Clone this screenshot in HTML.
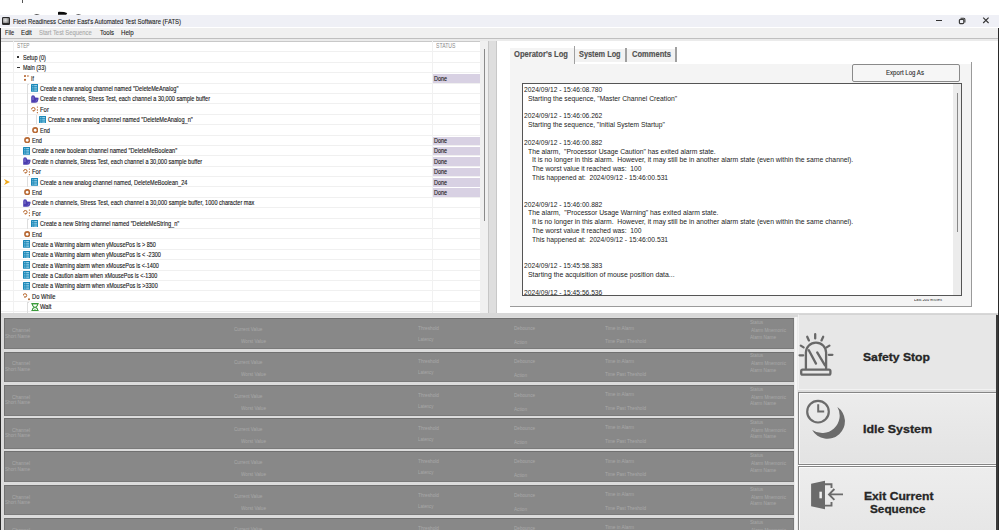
<!DOCTYPE html>
<html><head><meta charset="utf-8"><style>
html,body{margin:0;padding:0;width:999px;height:530px;overflow:hidden;background:#fff;position:relative}
span{position:absolute;white-space:pre;line-height:1;font-family:"Liberation Sans",sans-serif;transform-origin:0 50%}
</style></head><body>
<div style="position:absolute;left:21.5px;top:0px;width:1.2px;height:2.5px;background:#555"></div>
<svg style="position:absolute;left:30px;top:10px" width="60" height="6" viewBox="30 10 60 6"><path d="M34 14.8 Q36.5 13.2 39.8 14.8 Z" fill="#222"/><path d="M58 14.8 V12.4 Q58 11.7 59 11.7 L64 11.9 Q67 12.6 67.2 13.2 L66.2 14.8 Z" fill="#0a0a0a"/><path d="M75.8 14.8 Q78.3 13.3 81.2 14.8 Z" fill="#333"/></svg>
<div style="position:absolute;left:0px;top:14.8px;width:999px;height:12.7px;background:#eff0f6"></div>
<div style="position:absolute;left:2px;top:16.8px;width:8.2px;height:8px;background:#2a2a2a;border-radius:1.2px"></div>
<div style="position:absolute;left:3.2px;top:18.2px;width:5.8px;height:5.2px;background:radial-gradient(circle at 40% 45%,#e0e0e0 0,#b0b0b0 45%,#707070 80%);"></div>
<div style="position:absolute;left:936px;top:20.1px;width:5.5px;height:1.1px;background:#333"></div>
<svg style="position:absolute;left:955px;top:15px" width="14" height="12" viewBox="0 0 14 12"><rect x="4.4" y="4.4" width="4.4" height="4.2" rx="1.1" fill="none" stroke="#3a3a3a" stroke-width="1.2"/><path d="M5.6 3.3 H8.8 Q9.9 3.3 9.9 4.4 V7.4" fill="none" stroke="#3a3a3a" stroke-width="1.1"/></svg>
<svg style="position:absolute;left:980px;top:14px" width="12" height="12" viewBox="0 0 12 12"><path d="M3.2 3.6 L8.6 9 M8.6 3.6 L3.2 9" stroke="#333" stroke-width="1.1"/></svg>
<div style="position:absolute;left:0px;top:27.5px;width:999px;height:10.5px;background:#f0f0f0"></div>
<div style="position:absolute;left:0px;top:37.6px;width:999px;height:1.2px;background:#bfbfbf"></div>
<div style="position:absolute;left:0px;top:38.8px;width:999px;height:1.8px;background:#ebebeb"></div>
<div style="position:absolute;left:0px;top:40.6px;width:999px;height:1.1px;background:#c8c8c8"></div>
<div style="position:absolute;left:997.7px;top:27.5px;width:1.3px;height:502.5px;background:#2a2a2a"></div>
<div style="position:absolute;left:0px;top:27.5px;width:1.1px;height:502.5px;background:#2a2a2a"></div>
<div style="position:absolute;left:1.4px;top:41.7px;width:478.3px;height:271.1px;background:#fff"></div>
<div style="position:absolute;left:1.4px;top:51.4px;width:478.3px;height:1px;background:#f0f0f0"></div>
<div style="position:absolute;left:1.4px;top:61.79px;width:478.3px;height:1px;background:#f0f0f0"></div>
<div style="position:absolute;left:1.4px;top:72.18px;width:478.3px;height:1px;background:#f0f0f0"></div>
<div style="position:absolute;left:1.4px;top:82.57px;width:478.3px;height:1px;background:#f0f0f0"></div>
<div style="position:absolute;left:1.4px;top:92.96000000000001px;width:478.3px;height:1px;background:#f0f0f0"></div>
<div style="position:absolute;left:1.4px;top:103.35px;width:478.3px;height:1px;background:#f0f0f0"></div>
<div style="position:absolute;left:1.4px;top:113.74000000000001px;width:478.3px;height:1px;background:#f0f0f0"></div>
<div style="position:absolute;left:1.4px;top:124.13px;width:478.3px;height:1px;background:#f0f0f0"></div>
<div style="position:absolute;left:1.4px;top:134.52px;width:478.3px;height:1px;background:#f0f0f0"></div>
<div style="position:absolute;left:1.4px;top:144.91px;width:478.3px;height:1px;background:#f0f0f0"></div>
<div style="position:absolute;left:1.4px;top:155.3px;width:478.3px;height:1px;background:#f0f0f0"></div>
<div style="position:absolute;left:1.4px;top:165.69px;width:478.3px;height:1px;background:#f0f0f0"></div>
<div style="position:absolute;left:1.4px;top:176.08px;width:478.3px;height:1px;background:#f0f0f0"></div>
<div style="position:absolute;left:1.4px;top:186.47px;width:478.3px;height:1px;background:#f0f0f0"></div>
<div style="position:absolute;left:1.4px;top:196.86px;width:478.3px;height:1px;background:#f0f0f0"></div>
<div style="position:absolute;left:1.4px;top:207.25000000000003px;width:478.3px;height:1px;background:#f0f0f0"></div>
<div style="position:absolute;left:1.4px;top:217.64000000000001px;width:478.3px;height:1px;background:#f0f0f0"></div>
<div style="position:absolute;left:1.4px;top:228.03px;width:478.3px;height:1px;background:#f0f0f0"></div>
<div style="position:absolute;left:1.4px;top:238.42000000000002px;width:478.3px;height:1px;background:#f0f0f0"></div>
<div style="position:absolute;left:1.4px;top:248.81000000000003px;width:478.3px;height:1px;background:#f0f0f0"></div>
<div style="position:absolute;left:1.4px;top:259.2px;width:478.3px;height:1px;background:#f0f0f0"></div>
<div style="position:absolute;left:1.4px;top:269.59px;width:478.3px;height:1px;background:#f0f0f0"></div>
<div style="position:absolute;left:1.4px;top:279.98px;width:478.3px;height:1px;background:#f0f0f0"></div>
<div style="position:absolute;left:1.4px;top:290.37px;width:478.3px;height:1px;background:#f0f0f0"></div>
<div style="position:absolute;left:1.4px;top:300.76px;width:478.3px;height:1px;background:#f0f0f0"></div>
<div style="position:absolute;left:1.4px;top:311.15px;width:478.3px;height:1px;background:#f0f0f0"></div>
<div style="position:absolute;left:13.2px;top:41.4px;width:1px;height:271.4px;background:#f1f1f1"></div>
<div style="position:absolute;left:432.3px;top:41.4px;width:1px;height:271.4px;background:#f1f1f1"></div>
<div style="position:absolute;left:17.4px;top:56.290000000000006px;width:1.8px;height:1.8px;background:#333"></div>
<div style="position:absolute;left:17.4px;top:66.98px;width:3px;height:1.1px;background:#333"></div>
<div style="position:absolute;left:433px;top:74.17px;width:46.6px;height:8.5px;background:#d8d1e3"></div>
<svg style="position:absolute;left:24px;top:74.47px" width="7" height="9" viewBox="0 0 7 9"><circle cx="1" cy="2" r="1.1" fill="#b86a35"/><circle cx="1" cy="5.8" r="1.1" fill="#b86a35"/><path d="M3.4 1.1 L5.4 2 L3.4 2.9Z" fill="#b86a35"/></svg>
<svg style="position:absolute;left:31px;top:84.46000000000001px" width="7.4" height="7.8" viewBox="0 0 7.4 7.8"><rect width="7.4" height="7.8" rx="0.6" fill="#1b88b8"/><g fill="#b4e0f2"><rect x="1.3" y="1.2" width="4.8" height="1"/><rect x="1.3" y="3.4" width="4.8" height="1"/><rect x="1.3" y="5.6" width="4.8" height="1"/></g><rect x="2.4" y="1" width="0.8" height="6" fill="#1b88b8"/></svg>
<svg style="position:absolute;left:31px;top:94.95px" width="8" height="8" viewBox="0 0 8 8"><path d="M0.2 7.7 V2.2 Q0.2 0.2 2 0.2 Q3.8 0.2 4.2 2.4 L7.5 2.8 V4.2 L6.4 7.2 L4.2 7.7 Z" fill="#4b3eb0"/><path d="M2 1.6 V5" stroke="#9a90d8" stroke-width="0.8"/><path d="M4.8 6.6 L6.2 4.2" stroke="#8a80d0" stroke-width="0.6"/></svg>
<svg style="position:absolute;left:31px;top:104.54px" width="8" height="9" viewBox="0 0 8 9"><path d="M0.6 4.4 A1.75 1.75 0 1 1 2.2 6" fill="none" stroke="#b5652a" stroke-width="1"/><path d="M1.2 5.2 L2.9 5.1 L2.2 6.8 Z" fill="#b5652a"/><circle cx="6.4" cy="2.1" r="0.65" fill="#b5652a"/><circle cx="6.4" cy="5" r="0.65" fill="#b5652a"/><circle cx="6.4" cy="7.7" r="0.65" fill="#b5652a"/></svg>
<svg style="position:absolute;left:39px;top:115.63000000000001px" width="7.4" height="7.8" viewBox="0 0 7.4 7.8"><rect width="7.4" height="7.8" rx="0.6" fill="#1b88b8"/><g fill="#b4e0f2"><rect x="1.3" y="1.2" width="4.8" height="1"/><rect x="1.3" y="3.4" width="4.8" height="1"/><rect x="1.3" y="5.6" width="4.8" height="1"/></g><rect x="2.4" y="1" width="0.8" height="6" fill="#1b88b8"/></svg>
<svg style="position:absolute;left:32px;top:126.61999999999999px" width="6.4" height="6.4" viewBox="0 0 6.4 6.4"><circle cx="3.2" cy="3.2" r="2.3" fill="none" stroke="#b86a35" stroke-width="1.6"/></svg>
<div style="position:absolute;left:433px;top:136.51000000000002px;width:46.6px;height:8.5px;background:#d8d1e3"></div>
<svg style="position:absolute;left:24px;top:137.01000000000002px" width="6.4" height="6.4" viewBox="0 0 6.4 6.4"><circle cx="3.2" cy="3.2" r="2.3" fill="none" stroke="#b86a35" stroke-width="1.6"/></svg>
<div style="position:absolute;left:433px;top:146.90000000000003px;width:46.6px;height:8.5px;background:#d8d1e3"></div>
<svg style="position:absolute;left:23px;top:146.8px" width="7.4" height="7.8" viewBox="0 0 7.4 7.8"><rect width="7.4" height="7.8" rx="0.6" fill="#1b88b8"/><g fill="#b4e0f2"><rect x="1.3" y="1.2" width="4.8" height="1"/><rect x="1.3" y="3.4" width="4.8" height="1"/><rect x="1.3" y="5.6" width="4.8" height="1"/></g><rect x="2.4" y="1" width="0.8" height="6" fill="#1b88b8"/></svg>
<div style="position:absolute;left:433px;top:157.29000000000002px;width:46.6px;height:8.5px;background:#d8d1e3"></div>
<svg style="position:absolute;left:23px;top:157.29000000000002px" width="8" height="8" viewBox="0 0 8 8"><path d="M0.2 7.7 V2.2 Q0.2 0.2 2 0.2 Q3.8 0.2 4.2 2.4 L7.5 2.8 V4.2 L6.4 7.2 L4.2 7.7 Z" fill="#4b3eb0"/><path d="M2 1.6 V5" stroke="#9a90d8" stroke-width="0.8"/><path d="M4.8 6.6 L6.2 4.2" stroke="#8a80d0" stroke-width="0.6"/></svg>
<div style="position:absolute;left:433px;top:167.68px;width:46.6px;height:8.5px;background:#d8d1e3"></div>
<svg style="position:absolute;left:23px;top:166.88px" width="8" height="9" viewBox="0 0 8 9"><path d="M0.6 4.4 A1.75 1.75 0 1 1 2.2 6" fill="none" stroke="#b5652a" stroke-width="1"/><path d="M1.2 5.2 L2.9 5.1 L2.2 6.8 Z" fill="#b5652a"/><circle cx="6.4" cy="2.1" r="0.65" fill="#b5652a"/><circle cx="6.4" cy="5" r="0.65" fill="#b5652a"/><circle cx="6.4" cy="7.7" r="0.65" fill="#b5652a"/></svg>
<div style="position:absolute;left:433px;top:178.07px;width:46.6px;height:8.5px;background:#d8d1e3"></div>
<svg style="position:absolute;left:31px;top:177.96999999999997px" width="7.4" height="7.8" viewBox="0 0 7.4 7.8"><rect width="7.4" height="7.8" rx="0.6" fill="#1b88b8"/><g fill="#b4e0f2"><rect x="1.3" y="1.2" width="4.8" height="1"/><rect x="1.3" y="3.4" width="4.8" height="1"/><rect x="1.3" y="5.6" width="4.8" height="1"/></g><rect x="2.4" y="1" width="0.8" height="6" fill="#1b88b8"/></svg>
<div style="position:absolute;left:433px;top:188.46000000000004px;width:46.6px;height:8.5px;background:#d8d1e3"></div>
<svg style="position:absolute;left:24px;top:188.96000000000004px" width="6.4" height="6.4" viewBox="0 0 6.4 6.4"><circle cx="3.2" cy="3.2" r="2.3" fill="none" stroke="#b86a35" stroke-width="1.6"/></svg>
<svg style="position:absolute;left:23px;top:198.85000000000002px" width="8" height="8" viewBox="0 0 8 8"><path d="M0.2 7.7 V2.2 Q0.2 0.2 2 0.2 Q3.8 0.2 4.2 2.4 L7.5 2.8 V4.2 L6.4 7.2 L4.2 7.7 Z" fill="#4b3eb0"/><path d="M2 1.6 V5" stroke="#9a90d8" stroke-width="0.8"/><path d="M4.8 6.6 L6.2 4.2" stroke="#8a80d0" stroke-width="0.6"/></svg>
<svg style="position:absolute;left:23px;top:208.44px" width="8" height="9" viewBox="0 0 8 9"><path d="M0.6 4.4 A1.75 1.75 0 1 1 2.2 6" fill="none" stroke="#b5652a" stroke-width="1"/><path d="M1.2 5.2 L2.9 5.1 L2.2 6.8 Z" fill="#b5652a"/><circle cx="6.4" cy="2.1" r="0.65" fill="#b5652a"/><circle cx="6.4" cy="5" r="0.65" fill="#b5652a"/><circle cx="6.4" cy="7.7" r="0.65" fill="#b5652a"/></svg>
<svg style="position:absolute;left:31px;top:219.52999999999997px" width="7.4" height="7.8" viewBox="0 0 7.4 7.8"><rect width="7.4" height="7.8" rx="0.6" fill="#1b88b8"/><g fill="#b4e0f2"><rect x="1.3" y="1.2" width="4.8" height="1"/><rect x="1.3" y="3.4" width="4.8" height="1"/><rect x="1.3" y="5.6" width="4.8" height="1"/></g><rect x="2.4" y="1" width="0.8" height="6" fill="#1b88b8"/></svg>
<svg style="position:absolute;left:24px;top:230.52000000000004px" width="6.4" height="6.4" viewBox="0 0 6.4 6.4"><circle cx="3.2" cy="3.2" r="2.3" fill="none" stroke="#b86a35" stroke-width="1.6"/></svg>
<svg style="position:absolute;left:23px;top:240.31px" width="7.4" height="7.8" viewBox="0 0 7.4 7.8"><rect width="7.4" height="7.8" rx="0.6" fill="#1b88b8"/><g fill="#b4e0f2"><rect x="1.3" y="1.2" width="4.8" height="1"/><rect x="1.3" y="3.4" width="4.8" height="1"/><rect x="1.3" y="5.6" width="4.8" height="1"/></g><rect x="2.4" y="1" width="0.8" height="6" fill="#1b88b8"/></svg>
<svg style="position:absolute;left:23px;top:250.7px" width="7.4" height="7.8" viewBox="0 0 7.4 7.8"><rect width="7.4" height="7.8" rx="0.6" fill="#1b88b8"/><g fill="#b4e0f2"><rect x="1.3" y="1.2" width="4.8" height="1"/><rect x="1.3" y="3.4" width="4.8" height="1"/><rect x="1.3" y="5.6" width="4.8" height="1"/></g><rect x="2.4" y="1" width="0.8" height="6" fill="#1b88b8"/></svg>
<svg style="position:absolute;left:23px;top:261.09px" width="7.4" height="7.8" viewBox="0 0 7.4 7.8"><rect width="7.4" height="7.8" rx="0.6" fill="#1b88b8"/><g fill="#b4e0f2"><rect x="1.3" y="1.2" width="4.8" height="1"/><rect x="1.3" y="3.4" width="4.8" height="1"/><rect x="1.3" y="5.6" width="4.8" height="1"/></g><rect x="2.4" y="1" width="0.8" height="6" fill="#1b88b8"/></svg>
<svg style="position:absolute;left:23px;top:271.48px" width="7.4" height="7.8" viewBox="0 0 7.4 7.8"><rect width="7.4" height="7.8" rx="0.6" fill="#1b88b8"/><g fill="#b4e0f2"><rect x="1.3" y="1.2" width="4.8" height="1"/><rect x="1.3" y="3.4" width="4.8" height="1"/><rect x="1.3" y="5.6" width="4.8" height="1"/></g><rect x="2.4" y="1" width="0.8" height="6" fill="#1b88b8"/></svg>
<svg style="position:absolute;left:23px;top:281.87px" width="7.4" height="7.8" viewBox="0 0 7.4 7.8"><rect width="7.4" height="7.8" rx="0.6" fill="#1b88b8"/><g fill="#b4e0f2"><rect x="1.3" y="1.2" width="4.8" height="1"/><rect x="1.3" y="3.4" width="4.8" height="1"/><rect x="1.3" y="5.6" width="4.8" height="1"/></g><rect x="2.4" y="1" width="0.8" height="6" fill="#1b88b8"/></svg>
<svg style="position:absolute;left:23px;top:291.56px" width="9" height="9" viewBox="0 0 9 9"><path d="M0.2 3.6 A1.75 1.75 0 1 1 1.8 5.2" fill="none" stroke="#b5652a" stroke-width="1"/><path d="M0.8 4.4 L2.5 4.3 L1.8 6 Z" fill="#b5652a"/><circle cx="6" cy="7.3" r="1" fill="#b5652a"/></svg>
<svg style="position:absolute;left:31px;top:302.65px" width="8" height="8.4" viewBox="0 0 8 8.4"><path d="M0.4 0.6 H7.6 M0.4 7.8 H7.6" stroke="#3a9a3a" stroke-width="1.2"/><path d="M1.2 0.8 Q1.2 3.2 3.4 4.2 Q1.2 5.2 1.2 7.6 H6.8 Q6.8 5.2 4.6 4.2 Q6.8 3.2 6.8 0.8 Z" fill="none" stroke="#3a9a3a" stroke-width="1.1"/><path d="M3 6.6 H5 L4 5.6Z" fill="#3a9a3a"/></svg>
<div style="position:absolute;left:26.8px;top:84px;width:0.8px;height:50px;background:#dedede"></div>
<div style="position:absolute;left:26.8px;top:84px;width:1.8px;height:0.8px;background:#dedede"></div>
<div style="position:absolute;left:35.5px;top:115px;width:0.8px;height:9px;background:#dedede"></div>
<div style="position:absolute;left:35.5px;top:115px;width:1.8px;height:0.8px;background:#dedede"></div>
<div style="position:absolute;left:26.8px;top:176px;width:0.8px;height:10.5px;background:#dedede"></div>
<div style="position:absolute;left:26.8px;top:176px;width:1.8px;height:0.8px;background:#dedede"></div>
<div style="position:absolute;left:26.8px;top:219px;width:0.8px;height:9.5px;background:#dedede"></div>
<div style="position:absolute;left:26.8px;top:219px;width:1.8px;height:0.8px;background:#dedede"></div>
<div style="position:absolute;left:26.8px;top:302px;width:0.8px;height:10.5px;background:#dedede"></div>
<div style="position:absolute;left:26.8px;top:302px;width:1.8px;height:0.8px;background:#dedede"></div>
<svg style="position:absolute;left:4px;top:178.76999999999998px" width="7" height="6" viewBox="0 0 7 6"><path d="M0 0 L6 3 L0 6 L1.8 3 Z" fill="#f0a818"/></svg>
<div style="position:absolute;left:479.7px;top:41.4px;width:8.3px;height:271.4px;background:#f0f0f0"></div>
<div style="position:absolute;left:484px;top:48.8px;width:1px;height:172px;background:#8a8a8a"></div>
<div style="position:absolute;left:488px;top:41.4px;width:1px;height:271.4px;background:#c6c6c6"></div>
<div style="position:absolute;left:489px;top:41.4px;width:7.3px;height:271.4px;background:#dedede"></div>
<div style="position:absolute;left:496.3px;top:41.4px;width:1px;height:272.6px;background:#c8c8c8"></div>
<div style="position:absolute;left:497.3px;top:41.4px;width:500.4px;height:272.6px;background:#fff"></div>
<div style="position:absolute;left:510.2px;top:48px;width:63.8px;height:15.5px;background:#f4f4f4"></div>
<div style="position:absolute;left:575.4px;top:49px;width:50px;height:12.6px;background:#f2f2f2"></div>
<div style="position:absolute;left:627px;top:49px;width:48.5px;height:12.6px;background:#f2f2f2"></div>
<div style="position:absolute;left:573.5px;top:46px;width:1.2px;height:17.6px;background:#a0a0a0"></div>
<div style="position:absolute;left:625.4px;top:48px;width:1.2px;height:13.5px;background:#a0a0a0"></div>
<div style="position:absolute;left:675.4px;top:47px;width:1.2px;height:14.5px;background:#a0a0a0"></div>
<div style="position:absolute;left:510px;top:63.5px;width:461.5px;height:242.5px;background:#f4f4f4"></div>
<div style="position:absolute;left:971.2px;top:62px;width:1px;height:245px;background:#9a9a9a"></div>
<div style="position:absolute;left:510px;top:305.9px;width:462px;height:1px;background:#9a9a9a"></div>
<div style="position:absolute;left:851.9px;top:64.3px;width:106px;height:15.5px;border:1px solid #8a8a8a;border-radius:2px;background:#f6f6f6"></div>
<div style="position:absolute;left:522px;top:83.2px;width:438px;height:210.4px;border:1px solid #555;background:#fff;overflow:hidden"></div>
<div style="position:absolute;left:953.2px;top:84.2px;width:7.8px;height:210.4px;background:#ececec"></div>
<div style="position:absolute;left:956.6px;top:93px;width:1px;height:139px;background:#888"></div>
<div style="position:absolute;left:1.4px;top:312.8px;width:996.3px;height:4.7px;background:#d8d8d8"></div>
<div style="position:absolute;left:1.0px;top:317.4px;width:796px;height:212.60000000000002px;background:#dcdcdc"></div>
<div style="position:absolute;left:3.8px;top:318.30px;width:790.5px;height:30.7px;background:#888;box-shadow:inset 1px 1px 0 #707070, inset -1px -1px 0 #7a7a7a"></div>
<div style="position:absolute;left:3.8px;top:351.57px;width:790.5px;height:30.7px;background:#888;box-shadow:inset 1px 1px 0 #707070, inset -1px -1px 0 #7a7a7a"></div>
<div style="position:absolute;left:3.8px;top:384.84px;width:790.5px;height:30.7px;background:#888;box-shadow:inset 1px 1px 0 #707070, inset -1px -1px 0 #7a7a7a"></div>
<div style="position:absolute;left:3.8px;top:418.11px;width:790.5px;height:30.7px;background:#888;box-shadow:inset 1px 1px 0 #707070, inset -1px -1px 0 #7a7a7a"></div>
<div style="position:absolute;left:3.8px;top:451.38px;width:790.5px;height:30.7px;background:#888;box-shadow:inset 1px 1px 0 #707070, inset -1px -1px 0 #7a7a7a"></div>
<div style="position:absolute;left:3.8px;top:484.65px;width:790.5px;height:30.7px;background:#888;box-shadow:inset 1px 1px 0 #707070, inset -1px -1px 0 #7a7a7a"></div>
<div style="position:absolute;left:3.8px;top:517.92px;width:790.5px;height:30.7px;background:#888;box-shadow:inset 1px 1px 0 #707070, inset -1px -1px 0 #7a7a7a"></div>
<div style="position:absolute;left:794.3px;top:317.4px;width:3.9px;height:212.60000000000002px;background:#ebebeb"></div>
<div style="position:absolute;left:795.3px;top:317.4px;width:1.6px;height:212.60000000000002px;background:#f6f6f6"></div>
<div style="position:absolute;left:798.2px;top:314.3px;width:199.0999999999999px;height:76px;box-sizing:border-box;border:1px solid #f2f2f2;border-top-color:#d4d4d4;border-right-color:#a4a4a4;background:#e7e7e7"></div>
<div style="position:absolute;left:798.2px;top:390.3px;width:199px;height:1.6px;background:#dcdcdc"></div>
<div style="position:absolute;left:798.2px;top:391.9px;width:199.0999999999999px;height:73px;box-sizing:border-box;border:1px solid #858585;box-shadow:inset 1px 1px 0 #fafafa, inset -1px -1px 0 #efefef;background:linear-gradient(#ececec,#e3e3e3)"></div>
<div style="position:absolute;left:798.2px;top:465.6px;width:199.0999999999999px;height:70px;box-sizing:border-box;border:1px solid #858585;box-shadow:inset 1px 1px 0 #fafafa, inset -1px -1px 0 #efefef;background:linear-gradient(#ededed,#e6e6e6)"></div>
<div style="position:absolute;left:996.3px;top:315px;width:1.4px;height:215px;background:#3a3a3a"></div>
<svg style="position:absolute;left:795px;top:325px" width="50" height="60" viewBox="795 325 50 60">
<g fill="none" stroke="#686868" stroke-width="2.3" stroke-linecap="round">
<rect x="801.2" y="369.6" width="29.2" height="5" rx="1.4"/>
<path d="M805.9 368.6 V352.6 A10.1 10.1 0 0 1 826.1 352.6 V368.6"/>
<path d="M808.8 350.2 L816 363.6 M817.2 352.4 L825 365.3"/>
<path d="M815.2 334.2 V338.4 M807.2 336.8 L808.9 340.4 M823.2 336.8 L821.5 340.4 M800.8 345.6 L803.6 347.4 M829.4 345.6 L826.6 347.4 M799.6 355.3 H803.2 M828.8 354.8 H832.4"/>
</g></svg>
<svg style="position:absolute;left:798px;top:395px" width="55" height="50" viewBox="798 395 55 50">
<circle cx="818" cy="411.7" r="10.8" fill="none" stroke="#6b6b6b" stroke-width="2.2"/>
<path d="M818.2 404.3 V411.4 H824.2" fill="none" stroke="#6b6b6b" stroke-width="2"/>
<path d="M837.4 406.9 A17.5 17.5 0 1 1 812.2 429.9 A17.5 17.5 0 0 0 837.4 406.9 Z" fill="#6b6b6b"/>
</svg>
<svg style="position:absolute;left:800px;top:470px" width="50" height="50" viewBox="800 470 50 50">
<path d="M811.1 483.7 L825 480.8 V509.2 L811.1 506.3 Z" fill="#6b6b6b"/>
<rect x="819.4" y="491.7" width="2.5" height="6.6" fill="#f0f0f0"/>
<path d="M825 484.3 H831.5 V488 M831.5 502 V505.6 H825" fill="none" stroke="#6b6b6b" stroke-width="1.9"/>
<path d="M828.6 494.4 H843 M834.4 489 L829 494.4 L834.4 499.8" fill="none" stroke="#6b6b6b" stroke-width="1.9"/>
</svg>
<span style="left:13.30px;top:17.98px;font-size:7px;color:#1a1a1a;font-weight:normal;transform:scaleX(0.8504);-webkit-text-stroke:0.1px #1a1a1a">Fleet Readiness Center East&#x27;s Automated Test Software (FATS)</span>
<span style="left:4.90px;top:28.78px;font-size:7px;color:#222;font-weight:normal;transform:scaleX(0.8066);-webkit-text-stroke:0.1px #222">File</span>
<span style="left:21.30px;top:28.78px;font-size:7px;color:#222;font-weight:normal;transform:scaleX(0.8870);-webkit-text-stroke:0.1px #222">Edit</span>
<span style="left:39.00px;top:28.78px;font-size:7px;color:#a8a8a8;font-weight:normal;transform:scaleX(0.8391);-webkit-text-stroke:0.1px #a8a8a8">Start Test Sequence</span>
<span style="left:99.80px;top:28.78px;font-size:7px;color:#222;font-weight:normal;transform:scaleX(0.8566);-webkit-text-stroke:0.1px #222">Tools</span>
<span style="left:121.20px;top:28.78px;font-size:7px;color:#222;font-weight:normal;transform:scaleX(0.8746);-webkit-text-stroke:0.1px #222">Help</span>
<span style="left:16.60px;top:42.18px;font-size:7px;color:#8a8a8a;font-weight:normal;transform:scaleX(0.6886)">STEP</span>
<span style="left:436.00px;top:42.18px;font-size:7px;color:#8a8a8a;font-weight:normal;transform:scaleX(0.7337)">STATUS</span>
<span style="left:23.00px;top:53.87px;font-size:7px;color:#141414;font-weight:normal;transform:scaleX(0.7952);-webkit-text-stroke:0.12px #141414">Setup (0)</span>
<span style="left:23.00px;top:64.26px;font-size:7px;color:#141414;font-weight:normal;transform:scaleX(0.7776);-webkit-text-stroke:0.12px #141414">Main (33)</span>
<span style="left:31.30px;top:74.65px;font-size:7px;color:#141414;font-weight:normal;transform:scaleX(0.7454);-webkit-text-stroke:0.12px #141414">If</span>
<span style="left:434.20px;top:74.65px;font-size:7px;color:#141414;font-weight:normal;transform:scaleX(0.7768);-webkit-text-stroke:0.12px #141414">Done</span>
<span style="left:39.60px;top:85.04px;font-size:7px;color:#141414;font-weight:normal;transform:scaleX(0.7996);-webkit-text-stroke:0.12px #141414">Create a new analog channel named &quot;DeleteMeAnalog&quot;</span>
<span style="left:39.60px;top:95.43px;font-size:7px;color:#141414;font-weight:normal;transform:scaleX(0.7938);-webkit-text-stroke:0.12px #141414">Create n channels, Stress Test, each channel a 30,000 sample buffer</span>
<span style="left:39.60px;top:105.82px;font-size:7px;color:#141414;font-weight:normal;transform:scaleX(0.8476);-webkit-text-stroke:0.12px #141414">For</span>
<span style="left:47.60px;top:116.21px;font-size:7px;color:#141414;font-weight:normal;transform:scaleX(0.8006);-webkit-text-stroke:0.12px #141414">Create a new analog channel named &quot;DeleteMeAnalog_n&quot;</span>
<span style="left:39.60px;top:126.60px;font-size:7px;color:#141414;font-weight:normal;transform:scaleX(0.7940);-webkit-text-stroke:0.12px #141414">End</span>
<span style="left:31.60px;top:136.99px;font-size:7px;color:#141414;font-weight:normal;transform:scaleX(0.7940);-webkit-text-stroke:0.12px #141414">End</span>
<span style="left:434.20px;top:136.99px;font-size:7px;color:#141414;font-weight:normal;transform:scaleX(0.7768);-webkit-text-stroke:0.12px #141414">Done</span>
<span style="left:31.60px;top:147.38px;font-size:7px;color:#141414;font-weight:normal;transform:scaleX(0.8028);-webkit-text-stroke:0.12px #141414">Create a new boolean channel named &quot;DeleteMeBoolean&quot;</span>
<span style="left:434.20px;top:147.38px;font-size:7px;color:#141414;font-weight:normal;transform:scaleX(0.7768);-webkit-text-stroke:0.12px #141414">Done</span>
<span style="left:31.60px;top:157.77px;font-size:7px;color:#141414;font-weight:normal;transform:scaleX(0.7947);-webkit-text-stroke:0.12px #141414">Create n channels, Stress Test, each channel a 30,000 sample buffer</span>
<span style="left:434.20px;top:157.77px;font-size:7px;color:#141414;font-weight:normal;transform:scaleX(0.7768);-webkit-text-stroke:0.12px #141414">Done</span>
<span style="left:31.60px;top:168.16px;font-size:7px;color:#141414;font-weight:normal;transform:scaleX(0.8476);-webkit-text-stroke:0.12px #141414">For</span>
<span style="left:434.20px;top:168.16px;font-size:7px;color:#141414;font-weight:normal;transform:scaleX(0.7768);-webkit-text-stroke:0.12px #141414">Done</span>
<span style="left:39.60px;top:178.55px;font-size:7px;color:#141414;font-weight:normal;transform:scaleX(0.7940);-webkit-text-stroke:0.12px #141414">Create a new analog channel named, DeleteMeBoolean_24</span>
<span style="left:434.20px;top:178.55px;font-size:7px;color:#141414;font-weight:normal;transform:scaleX(0.7768);-webkit-text-stroke:0.12px #141414">Done</span>
<span style="left:31.60px;top:188.94px;font-size:7px;color:#141414;font-weight:normal;transform:scaleX(0.7940);-webkit-text-stroke:0.12px #141414">End</span>
<span style="left:434.20px;top:188.94px;font-size:7px;color:#141414;font-weight:normal;transform:scaleX(0.7768);-webkit-text-stroke:0.12px #141414">Done</span>
<span style="left:31.60px;top:199.33px;font-size:7px;color:#141414;font-weight:normal;transform:scaleX(0.7953);-webkit-text-stroke:0.12px #141414">Create n channels, Stress Test, each channel a 30,000 sample buffer, 1000 character max</span>
<span style="left:31.60px;top:209.72px;font-size:7px;color:#141414;font-weight:normal;transform:scaleX(0.8476);-webkit-text-stroke:0.12px #141414">For</span>
<span style="left:39.60px;top:220.11px;font-size:7px;color:#141414;font-weight:normal;transform:scaleX(0.7977);-webkit-text-stroke:0.12px #141414">Create a new String channel named &quot;DeleteMeString_n&quot;</span>
<span style="left:31.60px;top:230.50px;font-size:7px;color:#141414;font-weight:normal;transform:scaleX(0.7940);-webkit-text-stroke:0.12px #141414">End</span>
<span style="left:31.60px;top:240.89px;font-size:7px;color:#141414;font-weight:normal;transform:scaleX(0.7840);-webkit-text-stroke:0.12px #141414">Create a Warning alarm when yMousePos is &gt; 850</span>
<span style="left:31.60px;top:251.28px;font-size:7px;color:#141414;font-weight:normal;transform:scaleX(0.7848);-webkit-text-stroke:0.12px #141414">Create a Warning alarm when yMousePos is &lt; -2300</span>
<span style="left:31.60px;top:261.67px;font-size:7px;color:#141414;font-weight:normal;transform:scaleX(0.7824);-webkit-text-stroke:0.12px #141414">Create a Warning alarm when xMousePos is &lt;-1400</span>
<span style="left:31.60px;top:272.06px;font-size:7px;color:#141414;font-weight:normal;transform:scaleX(0.7812);-webkit-text-stroke:0.12px #141414">Create a Caution alarm when xMousePos is &lt;-1300</span>
<span style="left:31.60px;top:282.45px;font-size:7px;color:#141414;font-weight:normal;transform:scaleX(0.7863);-webkit-text-stroke:0.12px #141414">Create a Warning alarm when xMousePos is &gt;3300</span>
<span style="left:31.60px;top:292.84px;font-size:7px;color:#141414;font-weight:normal;transform:scaleX(0.8238);-webkit-text-stroke:0.12px #141414">Do While</span>
<span style="left:39.60px;top:303.23px;font-size:7px;color:#141414;font-weight:normal;transform:scaleX(0.8291);-webkit-text-stroke:0.12px #141414">Wait</span>
<span style="left:513.60px;top:49.75px;font-size:8.3px;color:#505050;font-weight:bold;transform:scaleX(0.9114);-webkit-text-stroke:0.15px #505050">Operator&#x27;s Log</span>
<span style="left:579.40px;top:50.45px;font-size:8.3px;color:#505050;font-weight:bold;transform:scaleX(0.8845);-webkit-text-stroke:0.15px #505050">System Log</span>
<span style="left:631.90px;top:50.45px;font-size:8.3px;color:#505050;font-weight:bold;transform:scaleX(0.9096);-webkit-text-stroke:0.15px #505050">Comments</span>
<span style="left:886.00px;top:68.98px;font-size:7px;color:#2a2a2a;font-weight:normal;transform:scaleX(0.8717);-webkit-text-stroke:0.1px #2a2a2a">Export Log As</span>
<span style="left:914.00px;top:296.56px;font-size:5px;color:#333;font-weight:normal;transform:scaleX(0.7867)">Last 500 entries</span>
<span style="left:523.70px;top:85.79px;font-size:7.6px;color:#222;font-weight:normal;transform:scaleX(0.8788)">2024/09/12 - 15:46:08.780</span>
<span style="left:527.90px;top:94.62px;font-size:7.6px;color:#222;font-weight:normal;transform:scaleX(0.8879)">Starting the sequence, &quot;Master Channel Creation&quot;</span>
<span style="left:523.70px;top:112.28px;font-size:7.6px;color:#222;font-weight:normal;transform:scaleX(0.8788)">2024/09/12 - 15:46:06.262</span>
<span style="left:527.90px;top:121.11px;font-size:7.6px;color:#222;font-weight:normal;transform:scaleX(0.8818)">Starting the sequence, &quot;Initial System Startup&quot;</span>
<span style="left:523.70px;top:138.77px;font-size:7.6px;color:#222;font-weight:normal;transform:scaleX(0.8788)">2024/09/12 - 15:46:00.882</span>
<span style="left:527.90px;top:147.60px;font-size:7.6px;color:#222;font-weight:normal;transform:scaleX(0.8898)">The alarm,  &quot;Processor Usage Caution&quot; has exited alarm state.</span>
<span style="left:532.00px;top:156.43px;font-size:7.6px;color:#222;font-weight:normal;transform:scaleX(0.8985)">It is no longer in this alarm.  However, it may still be in another alarm state (even within the same channel).</span>
<span style="left:532.00px;top:165.26px;font-size:7.6px;color:#222;font-weight:normal;transform:scaleX(0.8853)">The worst value it reached was:  100</span>
<span style="left:532.00px;top:174.09px;font-size:7.6px;color:#222;font-weight:normal;transform:scaleX(0.8831)">This happened at:  2024/09/12 - 15:46:00.531</span>
<span style="left:523.70px;top:200.58px;font-size:7.6px;color:#222;font-weight:normal;transform:scaleX(0.8788)">2024/09/12 - 15:46:00.882</span>
<span style="left:527.90px;top:209.41px;font-size:7.6px;color:#222;font-weight:normal;transform:scaleX(0.8949)">The alarm,  &quot;Processor Usage Warning&quot; has exited alarm state.</span>
<span style="left:532.00px;top:218.24px;font-size:7.6px;color:#222;font-weight:normal;transform:scaleX(0.8985)">It is no longer in this alarm.  However, it may still be in another alarm state (even within the same channel).</span>
<span style="left:532.00px;top:227.07px;font-size:7.6px;color:#222;font-weight:normal;transform:scaleX(0.8853)">The worst value it reached was:  100</span>
<span style="left:532.00px;top:235.90px;font-size:7.6px;color:#222;font-weight:normal;transform:scaleX(0.8831)">This happened at:  2024/09/12 - 15:46:00.531</span>
<span style="left:523.70px;top:262.39px;font-size:7.6px;color:#222;font-weight:normal;transform:scaleX(0.8788)">2024/09/12 - 15:45:58.383</span>
<span style="left:527.90px;top:271.22px;font-size:7.6px;color:#222;font-weight:normal;transform:scaleX(0.9067)">Starting the acquisition of mouse position data...</span>
<span style="left:523.70px;top:288.88px;font-size:7.6px;color:#222;font-weight:normal;transform:scaleX(0.8788)">2024/09/12 - 15:45:56.536</span>
<span style="left:12.00px;top:328.16px;font-size:5.2px;color:#a9a9a9;font-weight:normal;transform:scaleX(0.9313)">Channel</span>
<span style="left:5.20px;top:333.56px;font-size:5.2px;color:#a9a9a9;font-weight:normal;transform:scaleX(0.9029)">Short Name</span>
<span style="left:233.60px;top:327.16px;font-size:5.2px;color:#a9a9a9;font-weight:normal;transform:scaleX(0.8980)">Current Value</span>
<span style="left:241.00px;top:339.16px;font-size:5.2px;color:#a9a9a9;font-weight:normal;transform:scaleX(0.8999)">Worst Value</span>
<span style="left:418.00px;top:326.16px;font-size:5.2px;color:#a9a9a9;font-weight:normal;transform:scaleX(0.9100)">Threshold</span>
<span style="left:418.00px;top:337.16px;font-size:5.2px;color:#a9a9a9;font-weight:normal;transform:scaleX(0.8530)">Latency</span>
<span style="left:514.00px;top:326.16px;font-size:5.2px;color:#a9a9a9;font-weight:normal;transform:scaleX(0.8877)">Debounce</span>
<span style="left:514.00px;top:340.16px;font-size:5.2px;color:#a9a9a9;font-weight:normal;transform:scaleX(0.9014)">Action</span>
<span style="left:605.00px;top:325.66px;font-size:5.2px;color:#a9a9a9;font-weight:normal;transform:scaleX(0.9202)">Time in Alarm</span>
<span style="left:605.00px;top:339.16px;font-size:5.2px;color:#a9a9a9;font-weight:normal;transform:scaleX(0.8943)">Time Past Theshold</span>
<span style="left:750.00px;top:320.16px;font-size:5.2px;color:#a9a9a9;font-weight:normal;transform:scaleX(0.8832)">Status</span>
<span style="left:751.00px;top:328.16px;font-size:5.2px;color:#a9a9a9;font-weight:normal;transform:scaleX(0.8992)">Alarm Mnemonic</span>
<span style="left:750.00px;top:334.66px;font-size:5.2px;color:#a9a9a9;font-weight:normal;transform:scaleX(0.9019)">Alarm Name</span>
<span style="left:12.00px;top:361.43px;font-size:5.2px;color:#a9a9a9;font-weight:normal;transform:scaleX(0.9313)">Channel</span>
<span style="left:5.20px;top:366.83px;font-size:5.2px;color:#a9a9a9;font-weight:normal;transform:scaleX(0.9029)">Short Name</span>
<span style="left:233.60px;top:360.43px;font-size:5.2px;color:#a9a9a9;font-weight:normal;transform:scaleX(0.8980)">Current Value</span>
<span style="left:241.00px;top:372.43px;font-size:5.2px;color:#a9a9a9;font-weight:normal;transform:scaleX(0.8999)">Worst Value</span>
<span style="left:418.00px;top:359.43px;font-size:5.2px;color:#a9a9a9;font-weight:normal;transform:scaleX(0.9100)">Threshold</span>
<span style="left:418.00px;top:370.43px;font-size:5.2px;color:#a9a9a9;font-weight:normal;transform:scaleX(0.8530)">Latency</span>
<span style="left:514.00px;top:359.43px;font-size:5.2px;color:#a9a9a9;font-weight:normal;transform:scaleX(0.8877)">Debounce</span>
<span style="left:514.00px;top:373.43px;font-size:5.2px;color:#a9a9a9;font-weight:normal;transform:scaleX(0.9014)">Action</span>
<span style="left:605.00px;top:358.93px;font-size:5.2px;color:#a9a9a9;font-weight:normal;transform:scaleX(0.9202)">Time in Alarm</span>
<span style="left:605.00px;top:372.43px;font-size:5.2px;color:#a9a9a9;font-weight:normal;transform:scaleX(0.8943)">Time Past Theshold</span>
<span style="left:750.00px;top:353.43px;font-size:5.2px;color:#a9a9a9;font-weight:normal;transform:scaleX(0.8832)">Status</span>
<span style="left:751.00px;top:361.43px;font-size:5.2px;color:#a9a9a9;font-weight:normal;transform:scaleX(0.8992)">Alarm Mnemonic</span>
<span style="left:750.00px;top:367.93px;font-size:5.2px;color:#a9a9a9;font-weight:normal;transform:scaleX(0.9019)">Alarm Name</span>
<span style="left:12.00px;top:394.70px;font-size:5.2px;color:#a9a9a9;font-weight:normal;transform:scaleX(0.9313)">Channel</span>
<span style="left:5.20px;top:400.10px;font-size:5.2px;color:#a9a9a9;font-weight:normal;transform:scaleX(0.9029)">Short Name</span>
<span style="left:233.60px;top:393.70px;font-size:5.2px;color:#a9a9a9;font-weight:normal;transform:scaleX(0.8980)">Current Value</span>
<span style="left:241.00px;top:405.70px;font-size:5.2px;color:#a9a9a9;font-weight:normal;transform:scaleX(0.8999)">Worst Value</span>
<span style="left:418.00px;top:392.70px;font-size:5.2px;color:#a9a9a9;font-weight:normal;transform:scaleX(0.9100)">Threshold</span>
<span style="left:418.00px;top:403.70px;font-size:5.2px;color:#a9a9a9;font-weight:normal;transform:scaleX(0.8530)">Latency</span>
<span style="left:514.00px;top:392.70px;font-size:5.2px;color:#a9a9a9;font-weight:normal;transform:scaleX(0.8877)">Debounce</span>
<span style="left:514.00px;top:406.70px;font-size:5.2px;color:#a9a9a9;font-weight:normal;transform:scaleX(0.9014)">Action</span>
<span style="left:605.00px;top:392.20px;font-size:5.2px;color:#a9a9a9;font-weight:normal;transform:scaleX(0.9202)">Time in Alarm</span>
<span style="left:605.00px;top:405.70px;font-size:5.2px;color:#a9a9a9;font-weight:normal;transform:scaleX(0.8943)">Time Past Theshold</span>
<span style="left:750.00px;top:386.70px;font-size:5.2px;color:#a9a9a9;font-weight:normal;transform:scaleX(0.8832)">Status</span>
<span style="left:751.00px;top:394.70px;font-size:5.2px;color:#a9a9a9;font-weight:normal;transform:scaleX(0.8992)">Alarm Mnemonic</span>
<span style="left:750.00px;top:401.20px;font-size:5.2px;color:#a9a9a9;font-weight:normal;transform:scaleX(0.9019)">Alarm Name</span>
<span style="left:12.00px;top:427.97px;font-size:5.2px;color:#a9a9a9;font-weight:normal;transform:scaleX(0.9313)">Channel</span>
<span style="left:5.20px;top:433.37px;font-size:5.2px;color:#a9a9a9;font-weight:normal;transform:scaleX(0.9029)">Short Name</span>
<span style="left:233.60px;top:426.97px;font-size:5.2px;color:#a9a9a9;font-weight:normal;transform:scaleX(0.8980)">Current Value</span>
<span style="left:241.00px;top:438.97px;font-size:5.2px;color:#a9a9a9;font-weight:normal;transform:scaleX(0.8999)">Worst Value</span>
<span style="left:418.00px;top:425.97px;font-size:5.2px;color:#a9a9a9;font-weight:normal;transform:scaleX(0.9100)">Threshold</span>
<span style="left:418.00px;top:436.97px;font-size:5.2px;color:#a9a9a9;font-weight:normal;transform:scaleX(0.8530)">Latency</span>
<span style="left:514.00px;top:425.97px;font-size:5.2px;color:#a9a9a9;font-weight:normal;transform:scaleX(0.8877)">Debounce</span>
<span style="left:514.00px;top:439.97px;font-size:5.2px;color:#a9a9a9;font-weight:normal;transform:scaleX(0.9014)">Action</span>
<span style="left:605.00px;top:425.47px;font-size:5.2px;color:#a9a9a9;font-weight:normal;transform:scaleX(0.9202)">Time in Alarm</span>
<span style="left:605.00px;top:438.97px;font-size:5.2px;color:#a9a9a9;font-weight:normal;transform:scaleX(0.8943)">Time Past Theshold</span>
<span style="left:750.00px;top:419.97px;font-size:5.2px;color:#a9a9a9;font-weight:normal;transform:scaleX(0.8832)">Status</span>
<span style="left:751.00px;top:427.97px;font-size:5.2px;color:#a9a9a9;font-weight:normal;transform:scaleX(0.8992)">Alarm Mnemonic</span>
<span style="left:750.00px;top:434.47px;font-size:5.2px;color:#a9a9a9;font-weight:normal;transform:scaleX(0.9019)">Alarm Name</span>
<span style="left:12.00px;top:461.24px;font-size:5.2px;color:#a9a9a9;font-weight:normal;transform:scaleX(0.9313)">Channel</span>
<span style="left:5.20px;top:466.64px;font-size:5.2px;color:#a9a9a9;font-weight:normal;transform:scaleX(0.9029)">Short Name</span>
<span style="left:233.60px;top:460.24px;font-size:5.2px;color:#a9a9a9;font-weight:normal;transform:scaleX(0.8980)">Current Value</span>
<span style="left:241.00px;top:472.24px;font-size:5.2px;color:#a9a9a9;font-weight:normal;transform:scaleX(0.8999)">Worst Value</span>
<span style="left:418.00px;top:459.24px;font-size:5.2px;color:#a9a9a9;font-weight:normal;transform:scaleX(0.9100)">Threshold</span>
<span style="left:418.00px;top:470.24px;font-size:5.2px;color:#a9a9a9;font-weight:normal;transform:scaleX(0.8530)">Latency</span>
<span style="left:514.00px;top:459.24px;font-size:5.2px;color:#a9a9a9;font-weight:normal;transform:scaleX(0.8877)">Debounce</span>
<span style="left:514.00px;top:473.24px;font-size:5.2px;color:#a9a9a9;font-weight:normal;transform:scaleX(0.9014)">Action</span>
<span style="left:605.00px;top:458.74px;font-size:5.2px;color:#a9a9a9;font-weight:normal;transform:scaleX(0.9202)">Time in Alarm</span>
<span style="left:605.00px;top:472.24px;font-size:5.2px;color:#a9a9a9;font-weight:normal;transform:scaleX(0.8943)">Time Past Theshold</span>
<span style="left:750.00px;top:453.24px;font-size:5.2px;color:#a9a9a9;font-weight:normal;transform:scaleX(0.8832)">Status</span>
<span style="left:751.00px;top:461.24px;font-size:5.2px;color:#a9a9a9;font-weight:normal;transform:scaleX(0.8992)">Alarm Mnemonic</span>
<span style="left:750.00px;top:467.74px;font-size:5.2px;color:#a9a9a9;font-weight:normal;transform:scaleX(0.9019)">Alarm Name</span>
<span style="left:12.00px;top:494.51px;font-size:5.2px;color:#a9a9a9;font-weight:normal;transform:scaleX(0.9313)">Channel</span>
<span style="left:5.20px;top:499.91px;font-size:5.2px;color:#a9a9a9;font-weight:normal;transform:scaleX(0.9029)">Short Name</span>
<span style="left:233.60px;top:493.51px;font-size:5.2px;color:#a9a9a9;font-weight:normal;transform:scaleX(0.8980)">Current Value</span>
<span style="left:241.00px;top:505.51px;font-size:5.2px;color:#a9a9a9;font-weight:normal;transform:scaleX(0.8999)">Worst Value</span>
<span style="left:418.00px;top:492.51px;font-size:5.2px;color:#a9a9a9;font-weight:normal;transform:scaleX(0.9100)">Threshold</span>
<span style="left:418.00px;top:503.51px;font-size:5.2px;color:#a9a9a9;font-weight:normal;transform:scaleX(0.8530)">Latency</span>
<span style="left:514.00px;top:492.51px;font-size:5.2px;color:#a9a9a9;font-weight:normal;transform:scaleX(0.8877)">Debounce</span>
<span style="left:514.00px;top:506.51px;font-size:5.2px;color:#a9a9a9;font-weight:normal;transform:scaleX(0.9014)">Action</span>
<span style="left:605.00px;top:492.01px;font-size:5.2px;color:#a9a9a9;font-weight:normal;transform:scaleX(0.9202)">Time in Alarm</span>
<span style="left:605.00px;top:505.51px;font-size:5.2px;color:#a9a9a9;font-weight:normal;transform:scaleX(0.8943)">Time Past Theshold</span>
<span style="left:750.00px;top:486.51px;font-size:5.2px;color:#a9a9a9;font-weight:normal;transform:scaleX(0.8832)">Status</span>
<span style="left:751.00px;top:494.51px;font-size:5.2px;color:#a9a9a9;font-weight:normal;transform:scaleX(0.8992)">Alarm Mnemonic</span>
<span style="left:750.00px;top:501.01px;font-size:5.2px;color:#a9a9a9;font-weight:normal;transform:scaleX(0.9019)">Alarm Name</span>
<span style="left:12.00px;top:527.78px;font-size:5.2px;color:#a9a9a9;font-weight:normal;transform:scaleX(0.9313)">Channel</span>
<span style="left:5.20px;top:533.18px;font-size:5.2px;color:#a9a9a9;font-weight:normal;transform:scaleX(0.9029)">Short Name</span>
<span style="left:233.60px;top:526.78px;font-size:5.2px;color:#a9a9a9;font-weight:normal;transform:scaleX(0.8980)">Current Value</span>
<span style="left:241.00px;top:538.78px;font-size:5.2px;color:#a9a9a9;font-weight:normal;transform:scaleX(0.8999)">Worst Value</span>
<span style="left:418.00px;top:525.78px;font-size:5.2px;color:#a9a9a9;font-weight:normal;transform:scaleX(0.9100)">Threshold</span>
<span style="left:418.00px;top:536.78px;font-size:5.2px;color:#a9a9a9;font-weight:normal;transform:scaleX(0.8530)">Latency</span>
<span style="left:514.00px;top:525.78px;font-size:5.2px;color:#a9a9a9;font-weight:normal;transform:scaleX(0.8877)">Debounce</span>
<span style="left:514.00px;top:539.78px;font-size:5.2px;color:#a9a9a9;font-weight:normal;transform:scaleX(0.9014)">Action</span>
<span style="left:605.00px;top:525.28px;font-size:5.2px;color:#a9a9a9;font-weight:normal;transform:scaleX(0.9202)">Time in Alarm</span>
<span style="left:605.00px;top:538.78px;font-size:5.2px;color:#a9a9a9;font-weight:normal;transform:scaleX(0.8943)">Time Past Theshold</span>
<span style="left:750.00px;top:519.78px;font-size:5.2px;color:#a9a9a9;font-weight:normal;transform:scaleX(0.8832)">Status</span>
<span style="left:751.00px;top:527.78px;font-size:5.2px;color:#a9a9a9;font-weight:normal;transform:scaleX(0.8992)">Alarm Mnemonic</span>
<span style="left:750.00px;top:534.28px;font-size:5.2px;color:#a9a9a9;font-weight:normal;transform:scaleX(0.9019)">Alarm Name</span>
<span style="left:863.30px;top:352.33px;font-size:11.2px;color:#262626;font-weight:bold;transform:scaleX(1.0886);-webkit-text-stroke:0.3px #262626">Safety Stop</span>
<span style="left:863.30px;top:424.23px;font-size:11.2px;color:#262626;font-weight:bold;transform:scaleX(1.1095);-webkit-text-stroke:0.3px #262626">Idle System</span>
<span style="left:863.50px;top:491.03px;font-size:11.2px;color:#262626;font-weight:bold;transform:scaleX(1.0854);-webkit-text-stroke:0.3px #262626">Exit Current</span>
<span style="left:870.00px;top:504.23px;font-size:11.2px;color:#262626;font-weight:bold;transform:scaleX(1.0518);-webkit-text-stroke:0.3px #262626">Sequence</span>
<div style="position:absolute;left:523px;top:294.7px;width:438.4px;height:3px;background:#f4f4f4;border-top:1px solid #555"></div>
</body></html>
